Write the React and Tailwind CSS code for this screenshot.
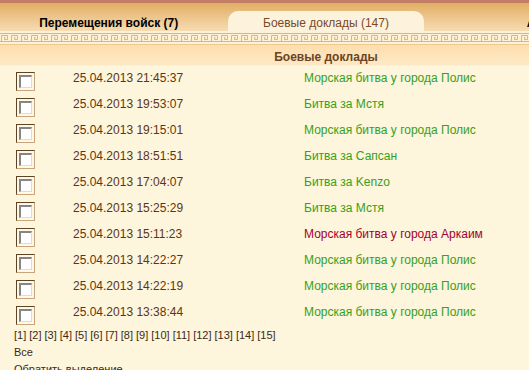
const reports = [
  { date: "25.04.2013 21:45:37", title: "Морская битва у города Полис", win: true },
  { date: "25.04.2013 19:53:07", title: "Битва за Мстя", win: true },
  { date: "25.04.2013 19:15:01", title: "Морская битва у города Полис", win: true },
  { date: "25.04.2013 18:51:51", title: "Битва за Сапсан", win: true },
  { date: "25.04.2013 17:04:07", title: "Битва за Kenzo", win: true },
  { date: "25.04.2013 15:25:29", title: "Битва за Мстя", win: true },
  { date: "25.04.2013 15:11:23", title: "Морская битва у города Аркаим", win: false },
  { date: "25.04.2013 14:22:27", title: "Морская битва у города Полис", win: true },
  { date: "25.04.2013 14:22:19", title: "Морская битва у города Полис", win: true },
  { date: "25.04.2013 13:38:44", title: "Морская битва у города Полис", win: true },
];

const pages = [1, 2, 3, 4, 5, 6, 7, 8, 9, 10, 11, 12, 13, 14, 15];

function Checkbox() {
  return (
    <div className="w-[19px] h-[19px] border border-t-[#5b4323] border-l-[#5b4323] border-r-[#caa57a] border-b-[#caa57a] p-[2px] bg-[#fdf8e8]">
      <div className="w-[13px] h-[13px] border-t-2 border-l-2 border-r border-b border-t-[#858585] border-l-[#858585] border-r-[#dcdcdc] border-b-[#dcdcdc] bg-white" />
    </div>
  );
}

function Meander() {
  return (
    <svg width="652" height="13" className="block">
      <defs>
        <pattern id="key" width="10" height="13" patternUnits="userSpaceOnUse">
          <path
            d="M0 2.5 H10 M0 10.5 H10 M1.5 10 V4.5 H7.5 V8.5 H4.5 V6.5 H5.5"
            fill="none"
            stroke="#dbb67c"
            strokeWidth="1"
          />
        </pattern>
      </defs>
      <rect width="652" height="13" fill="#fdf1d8" />
      <rect width="652" height="13" fill="url(#key)" />
    </svg>
  );
}

export default function App() {
  return (
    <div className="w-[529px] h-[370px] overflow-hidden bg-[#fdf5dc] font-['Liberation_Sans',Arial,sans-serif] text-[12px]">
      <div className="w-[652px]">
        <div className="h-[31px] border-t-[3px] border-[#c37d66] bg-gradient-to-b from-[#e1ae63] to-[#f7dcb2] grid grid-cols-3 items-end">
          <div className="h-[20px] leading-[24px] text-center font-bold text-black">
            Перемещения войск (7)
          </div>
          <div className="h-[20px] mx-[11px] rounded-t-[10px] bg-[#fdf2dc] leading-[24px] text-center text-[#7a4a28]">
            Боевые доклады (147)
          </div>
          <div className="h-[20px] leading-[24px] text-center font-bold text-black pl-[4px]">
            Архив
          </div>
        </div>
        <Meander />
        <div className="h-[22px] border-t border-[#efc88d] border-b border-b-[#fef0d4] bg-gradient-to-b from-[#fddeae] to-[#fde9c6] pt-[2px] leading-[20px] text-center font-bold text-[#6b4423]">
          Боевые доклады
        </div>
        {reports.map((r, i) => (
          <div key={i} className="h-[26px] flex items-start pt-[5px] leading-[14px]">
            <div className="w-[73px] pl-[16px] pt-[1px]">
              <Checkbox />
            </div>
            <div className="w-[231px] text-[#5e3512]">{r.date}</div>
            <a className={r.win ? "text-[#36a021]" : "text-[#a6002d]"}>{r.title}</a>
          </div>
        ))}
        <div className="pl-[14px] pt-[1px] text-[11px] leading-[17px] text-[#3d2a12]">
          <div className="flex gap-[3px]">
            {pages.map((p) => (
              <span key={p}>[{p}]</span>
            ))}
          </div>
          <div>Все</div>
          <div>Обратить выделение</div>
        </div>
      </div>
    </div>
  );
}
